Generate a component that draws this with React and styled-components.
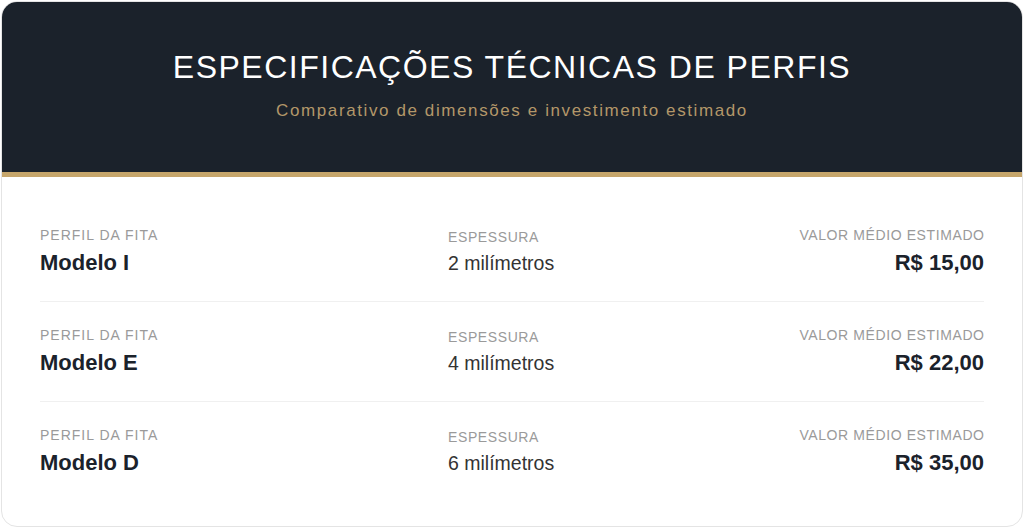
import React from "react";
import styled, { createGlobalStyle } from "styled-components";

const Global = createGlobalStyle`
  html, body { margin: 0; padding: 0; background: #ffffff; }
  body { font-family: "Liberation Sans", Arial, sans-serif; }
  * { box-sizing: border-box; }
`;

const Page = styled.div`
  padding: 1px;
  height: 528px;
`;

const Card = styled.section`
  border: 1px solid #e4e4e4;
  border-radius: 16px;
  overflow: hidden;
  background: #ffffff;
  height: 526px;
  display: flex;
  flex-direction: column;
`;

const Header = styled.header`
  background: #1b222b;
  border-bottom: 5px solid #c6a66b;
  height: 176px;
  display: flex;
  flex-direction: column;
  align-items: center;
  padding-top: 45px;
`;

const Title = styled.h1`
  margin: 0;
  color: #ffffff;
  font-size: 32px;
  line-height: 40px;
  font-weight: 400;
  letter-spacing: 1.5px;
`;

const Subtitle = styled.p`
  margin: 14px 0 0;
  color: #b39769;
  font-size: 17px;
  line-height: 20px;
  letter-spacing: 1.6px;
`;

const Body = styled.div`
  padding: 25px 38px;
  display: flex;
  flex-direction: column;
`;

const Row = styled.div`
  display: grid;
  grid-template-columns: 408px 1fr auto;
  align-items: center;
  padding: 25px 0;
  border-bottom: ${(p) => (p.$last ? "none" : "1px solid #f0f0f0")};
`;

const Cell = styled.div`
  display: flex;
  flex-direction: column;
  align-items: ${(p) => (p.$right ? "flex-end" : "flex-start")};
`;

const Label = styled.span`
  font-size: 14px;
  line-height: 16px;
  letter-spacing: ${(p) => (p.$wide ? "1px" : "0.6px")};
  color: #9a9a9a;
  text-transform: uppercase;
  margin-bottom: 6px;
  margin-right: ${(p) => (p.$right ? "-0.6px" : "0")};
`;

const Strong = styled.span`
  font-size: 22px;
  line-height: 27px;
  font-weight: 700;
  color: #1b222b;
`;

const Plain = styled.span`
  font-size: 19.5px;
  line-height: 24px;
  color: #333333;
`;

const rows = [
  { model: "Modelo I", mm: "2 milímetros", price: "R$ 15,00" },
  { model: "Modelo E", mm: "4 milímetros", price: "R$ 22,00" },
  { model: "Modelo D", mm: "6 milímetros", price: "R$ 35,00" },
];

export default function App() {
  return (
    <>
      <Global />
      <Page>
        <Card>
          <Header>
            <Title>ESPECIFICAÇÕES TÉCNICAS DE PERFIS</Title>
            <Subtitle>Comparativo de dimensões e investimento estimado</Subtitle>
          </Header>
          <Body>
            {rows.map((r, i) => (
              <Row key={r.model} $last={i === rows.length - 1}>
                <Cell>
                  <Label $wide>Perfil da Fita</Label>
                  <Strong>{r.model}</Strong>
                </Cell>
                <Cell>
                  <Label>Espessura</Label>
                  <Plain>{r.mm}</Plain>
                </Cell>
                <Cell $right>
                  <Label $right>Valor Médio Estimado</Label>
                  <Strong>{r.price}</Strong>
                </Cell>
              </Row>
            ))}
          </Body>
        </Card>
      </Page>
    </>
  );
}
